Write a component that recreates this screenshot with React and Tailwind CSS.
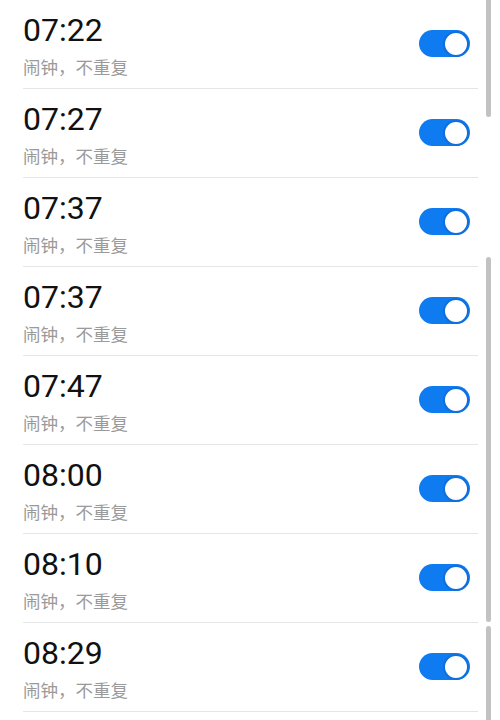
import React from "react";

const alarms = ["07:22", "07:27", "07:37", "07:37", "07:47", "08:00", "08:10", "08:29"];

function Toggle() {
  return (
    <div className="w-[51px] h-[27px] rounded-full bg-[#0f7bf0] flex items-center justify-end pr-[1px]">
      <div className="w-[26px] h-[26px] rounded-full bg-white border-2 border-[#0f6fdc]" />
    </div>
  );
}

function AlarmRow({ time }) {
  return (
    <div className="h-[89px] ml-[23px] mr-[22px] border-b border-[#e6e6e6] flex justify-between">
      <div className="pt-[12px]">
        <div className="text-[32px] leading-[37px] text-[#111] font-['Roboto',sans-serif]">{time}</div>
        <div className="mt-[6px] text-[17.5px] leading-[24px] text-[#9a9a9a] font-['Noto_Sans_CJK_SC',sans-serif]">
          闹钟，不重复
        </div>
      </div>
      <div className="flex items-center pr-[8px] pb-px">
        <Toggle />
      </div>
    </div>
  );
}

export default function App() {
  return (
    <div className="relative w-[500px] h-[720px] overflow-hidden bg-white">
      {alarms.map((t, i) => (
        <AlarmRow key={i} time={t} />
      ))}

      {/* scrollbar fragments */}
      <div className="absolute left-[486px] top-0 w-[5px] h-[117px] rounded-b bg-[#c2c2c2]" />
      <div className="absolute left-[486px] top-[257px] w-[5px] h-[365px] rounded bg-[#c2c2c2]" />
      <div className="absolute left-[486px] top-[626px] w-[5px] h-[94px] rounded-t bg-[#c2c2c2]" />
    </div>
  );
}
